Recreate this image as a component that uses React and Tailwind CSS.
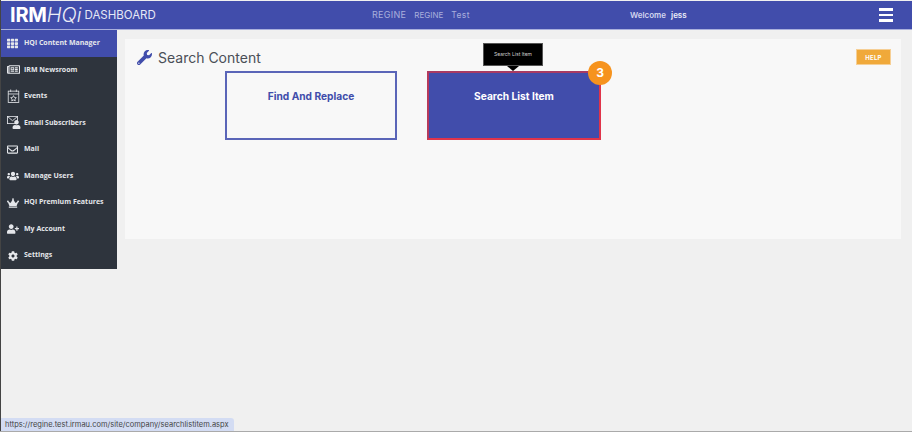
import React from 'react';
import { FaTh, FaRegNewspaper, FaRegEnvelope, FaUsers, FaCrown, FaUserPlus, FaCog, FaWrench, FaUser } from 'react-icons/fa';

const EventsIcon = () => (
  <svg width="13" height="16" viewBox="0 0 16 18" fill="none" stroke="#e5e7eb" strokeWidth="1">
    <rect x="1.5" y="3" width="13" height="14" />
    <path d="M1.5 6.5h13M4.5 1v3M11.500 1v3" />
    <path d="M8 8.500l1.100 2.300 2.400.3-1.800 1.600.5 2.400L8 13.900l-2.200 1.200.5-2.400-1.800-1.600 2.400-.3z" />
  </svg>
);

const EmailIcon = () => (
  <span className="relative block w-[14px] h-[13px]">
    <svg width="11" height="8" viewBox="0 0 15 11" fill="none" stroke="#e5e7eb" strokeWidth="1.200">
      <rect x="0.500" y="0.500" width="14" height="10" />
      <path d="M0.500 0.500l7 6 7-6" />
    </svg>
    <FaUser className="absolute right-0 bottom-0 text-[9px] text-[#e5e7eb]" />
  </span>
);

const menu = [
  { label: 'HQi Content Manager', icon: <FaTh className="text-[11px]" />, active: true },
  { label: 'IRM Newsroom', icon: <FaRegNewspaper className="text-[13px]" /> },
  { label: 'Events', icon: <EventsIcon /> },
  { label: 'Email Subscribers', icon: <EmailIcon /> },
  { label: 'Mail', icon: <FaRegEnvelope className="text-[11px]" /> },
  { label: 'Manage Users', icon: <FaUsers className="text-[12px]" /> },
  { label: 'HQi Premium Features', icon: <FaCrown className="text-[12px]" /> },
  { label: 'My Account', icon: <FaUserPlus className="text-[12px]" /> },
  { label: 'Settings', icon: <FaCog className="text-[10px] ml-[1px]" /> },
];

const Header = () => (
  <header className="h-[29px] mt-px bg-[#414dab] border-b border-[#aab0dc] flex items-center text-white shrink-0">
    <div className="w-[371px] pl-[9px] flex items-center">
      <span className="text-[20px] font-bold tracking-[-0.2px]">IRM</span>
      <span className="text-[20px] italic font-light opacity-90">HQi</span>
      <span className="text-[11.500px] ml-[3px] pt-[2px] text-[#e6e8f6]">DASHBOARD</span>
    </div>
    <div className="flex items-baseline gap-[8px] text-[#a9afdc] w-[258px]">
      <span className="text-[9px] tracking-[0.3px]">REGINE</span>
      <span className="text-[8px]">REGINE</span>
      <span className="text-[8.500px] tracking-[0.4px]">Test</span>
    </div>
    <div className="flex gap-[5px] text-[8px] font-semibold w-[249px]">
      <span className="text-[#d3d6ef]">Welcome</span>
      <span className="text-[#eef0fa]">jess</span>
    </div>
    <div className="w-[14px] flex flex-col gap-[3px]">
      <div className="h-[2.500px] bg-white" />
      <div className="h-[2.500px] bg-white" />
      <div className="h-[2.500px] bg-white" />
    </div>
  </header>
);

const Sidebar = () => (
  <aside className="w-[116px] h-[239px] shrink-0 bg-[#2e343d] flex flex-col font-['Open_Sans',sans-serif]">
    {menu.map((item) => (
      <div
        key={item.label}
        className={`h-[26.550px] flex items-center text-[7px] font-bold text-[#e5e7eb] ${item.active ? 'bg-[#414dab]' : ''}`}
      >
        <span className="w-[23px] pl-[6px] flex justify-start items-center shrink-0">{item.icon}</span>
        <span className="whitespace-nowrap">{item.label}</span>
      </div>
    ))}
  </aside>
);

const Content = () => (
  <main className="flex-1 pt-[9px] pl-[8px] pr-[11px]">
    <section className="relative h-[200px] bg-[#f8f8f8] pt-[9px] px-[12px]">
      <div className="flex items-center gap-[6px] h-[18px]">
        <FaWrench className="text-[15px] text-[#414dab]" />
        <h1 className="text-[14px] text-[#4a4f57] font-normal">Search Content</h1>
      </div>
      <span className="absolute left-[731px] top-[10px] w-[35px] h-[16px] bg-[#f0a93a] border border-[#f6cf95] flex items-center justify-center text-[6px] font-bold text-white tracking-[0.3px]">
        HELP
      </span>
      <div className="flex gap-[30px] mt-[5px] ml-[88px]">
        <div className="w-[172px] h-[69px] border-2 border-[#5a65b8] pt-[16px] text-center text-[10.200px] font-bold text-[#414dab]">
          Find And Replace
        </div>
        <div className="relative w-[174px] h-[69px] bg-[#414dab] border-2 border-[#e0344a] border-t-[#a83a63] border-l-[#b63a5c] pt-[16px] text-center text-[10.200px] font-bold text-white">
          Search List Item
          <span className="absolute left-[54px] -top-[30px] w-[60px] h-[23px] bg-black border border-[#555] flex items-center justify-center text-[5px] font-normal text-[#cfcfcf]">
            Search List Item
          </span>
          <span className="absolute left-[78px] -top-[7px] w-0 h-0 border-x-[6px] border-x-transparent border-t-[5px] border-t-black" />
          <span className="absolute left-[159px] -top-[12px] w-[24px] h-[24px] rounded-full bg-[#f6931e] flex items-center justify-center text-[12px] font-bold text-white">
            3
          </span>
        </div>
      </div>
    </section>
  </main>
);

export default function App() {
  return (
    <div className="relative w-[912px] h-[439px] bg-white overflow-hidden font-['Inter','Open_Sans',sans-serif]">
      <div className="h-[431px] bg-[#f0f0f0] border-l border-[#444] flex flex-col">
        <Header />
        <div className="flex flex-1">
          <Sidebar />
          <Content />
        </div>
      </div>
      <div className="h-px bg-[#aaa]" />
      <div className="absolute left-[1px] top-[418px] w-[233px] h-[13px] bg-[#d3dcf3] rounded-tr-[3px] px-[4px] flex items-center text-[7.500px] text-[#444] whitespace-nowrap">
        https://regine.test.irmau.com/site/company/searchlistitem.aspx
      </div>
    </div>
  );
}
